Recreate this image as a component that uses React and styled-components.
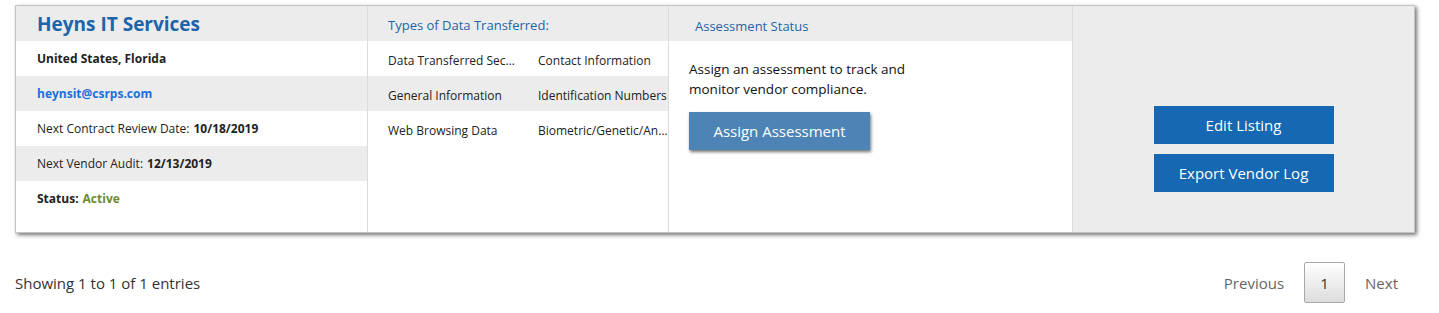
import * as React from "react"
import styled, { createGlobalStyle } from "styled-components"

const GlobalStyle = createGlobalStyle`
  body {
    margin: 0;
    background: #ffffff;
    font-family: "Segoe UI", "Open Sans", "Noto Sans", sans-serif;
    color: #222;
  }
`

const PageWrapper = styled.div`
  width: 1439px;
  padding: 5px 24px 0 15px;
  box-sizing: border-box;
`

const Card = styled.div`
  display: grid;
  grid-template-columns: 352px 301px 404px 1fr;
  height: 228px;
  border: 1px solid #c4c4c4;
  box-shadow: 2px 2px 4px rgba(0, 0, 0, 0.55);
  background: #fff;
  box-sizing: border-box;
`

const Column = styled.div`
  display: flex;
  flex-direction: column;
  border-right: 1px solid #dcdcdc;
  background: ${ p => p.$shaded ? "#ececec" : "#fff" };
  &:last-child {
    border-right: none;
  }
`

const Header = styled.div`
  height: 35px;
  flex-shrink: 0;
  display: flex;
  align-items: center;
  background: #ececec;
  padding-left: ${ p => p.$pad || "20px" };
  padding-top: ${ p => p.$top || "0" };
  box-sizing: border-box;
  color: #1d64a8;
  font-size: ${ p => p.$size || "13px" };
  font-weight: ${ p => p.$bold ? 700 : 400 };
`

const InfoRow = styled.div`
  height: 35px;
  display: flex;
  align-items: center;
  padding-left: 21px;
  font-size: 12px;
  background: ${ p => p.$shaded ? "#ececec" : "#fff" };
  color: #222;
`

const Strong = styled.span`
  font-weight: 700;
  color: ${ p => p.$color || "#222" };
  margin-left: ${ p => p.$gap ? "4px" : "0" };
`

const Email = styled.span`
  color: #1a70dc;
  font-weight: 700;
`

const DataRow = styled.div`
  height: 35px;
  box-sizing: border-box;
  padding-top: 4px;
  display: grid;
  grid-template-columns: 150px 130px;
  align-items: center;
  padding-left: 20px;
  font-size: 12px;
  background: ${ p => p.$shaded ? "#ececec" : "#fff" };
`

const Cell = styled.span`
  white-space: nowrap;
  overflow: hidden;
  text-overflow: ellipsis;
  padding-right: 18px;
  &:last-child {
    padding-right: 0;
  }
`

const AssessBody = styled.div`
  padding: 18px 20px 0 20px;
  display: flex;
  flex-direction: column;
  align-items: flex-start;
`

const AssessText = styled.p`
  margin: 0 0 13px 0;
  font-size: 13.5px;
  line-height: 20px;
  font-weight: 500;
  color: #111;
  width: 240px;
`

const AssignButton = styled.button`
  width: 181px;
  height: 38px;
  border: none;
  background: #4d84b5;
  color: #fff;
  font-family: inherit;
  font-size: 15px;
  box-shadow: 1px 2px 3px rgba(0, 0, 0, 0.55);
`

const ActionColumn = styled(Column)`
  justify-content: center;
  align-items: center;
  gap: 10px;
  padding-top: 60px;
  box-sizing: border-box;
`

const PrimaryButton = styled.button`
  width: 180px;
  height: 38px;
  border: none;
  background: #1568b1;
  color: #fff;
  font-family: inherit;
  font-size: 15px;
`

const Footer = styled.div`
  display: flex;
  justify-content: space-between;
  align-items: center;
  margin-top: 29px;
`

const Info = styled.div`
  font-size: 15px;
  color: #333;
`

const Pager = styled.div`
  display: flex;
  align-items: center;
`

const PageLink = styled.span`
  font-size: 15px;
  color: #666;
  padding: 0 ${ p => p.$last ? "17px" : "20px" } 0 20px;
`

const PageNumber = styled.span`
  width: 41px;
  height: 41px;
  box-sizing: border-box;
  display: flex;
  align-items: center;
  justify-content: center;
  border: 1px solid #a8a8a8;
  border-radius: 2px;
  background: linear-gradient(#ffffff, #dcdcdc);
  font-size: 15px;
  color: #333;
`

const App = () => {
  return (
    <PageWrapper>
      <GlobalStyle />
      <Card>
        <Column>
          <Header $size="19px" $bold $pad="21px">Heyns IT Services</Header>
          <InfoRow><Strong>United States, Florida</Strong></InfoRow>
          <InfoRow $shaded><Email>heynsit@csrps.com</Email></InfoRow>
          <InfoRow>Next Contract Review Date:<Strong $gap>10/18/2019</Strong></InfoRow>
          <InfoRow $shaded>Next Vendor Audit:<Strong $gap>12/13/2019</Strong></InfoRow>
          <InfoRow><Strong>Status:</Strong><Strong $gap $color="#6b8a2e">Active</Strong></InfoRow>
        </Column>
        <Column>
          <Header $top="2px">Types of Data Transferred:</Header>
          <DataRow>
            <Cell>Data Transferred Security</Cell>
            <Cell>Contact Information</Cell>
          </DataRow>
          <DataRow $shaded>
            <Cell>General Information</Cell>
            <Cell>Identification Numbers</Cell>
          </DataRow>
          <DataRow>
            <Cell>Web Browsing Data</Cell>
            <Cell>Biometric/Genetic/Analytics</Cell>
          </DataRow>
        </Column>
        <Column>
          <Header $pad="26px" $top="4px">Assessment Status</Header>
          <AssessBody>
            <AssessText>Assign an assessment to track and monitor vendor compliance.</AssessText>
            <AssignButton>Assign Assessment</AssignButton>
          </AssessBody>
        </Column>
        <ActionColumn $shaded>
          <PrimaryButton>Edit Listing</PrimaryButton>
          <PrimaryButton>Export Vendor Log</PrimaryButton>
        </ActionColumn>
      </Card>
      <Footer>
        <Info>Showing 1 to 1 of 1 entries</Info>
        <Pager>
          <PageLink>Previous</PageLink>
          <PageNumber>1</PageNumber>
          <PageLink $last>Next</PageLink>
        </Pager>
      </Footer>
    </PageWrapper>
  )
}

export default App
